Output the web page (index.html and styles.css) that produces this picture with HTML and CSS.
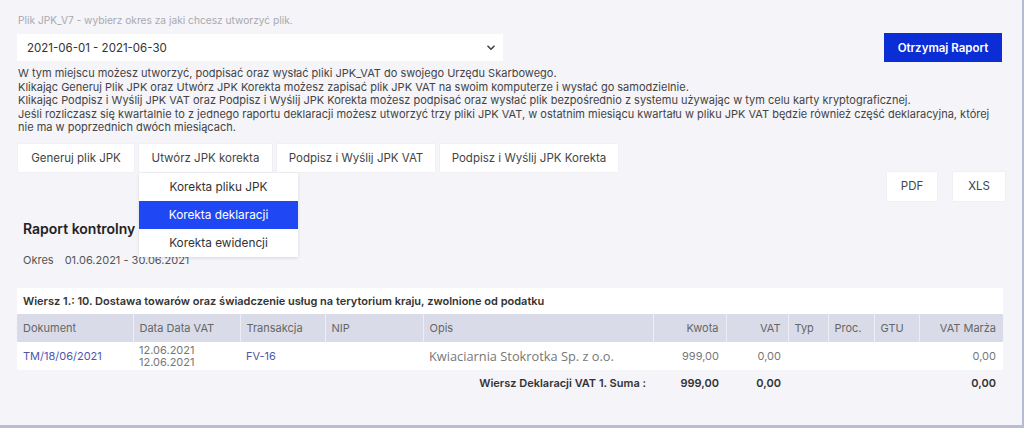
FILE: index.html
```html
<!DOCTYPE html>
<html lang="pl">
<head>
<meta charset="utf-8">
<title>Plik JPK_V7</title>
<link rel="stylesheet" href="styles.css">
</head>
<body>
<div class="page">
  <div class="hint">Plik JPK_V7 - wybierz okres za jaki chcesz utworzyć plik.</div>
  <div class="period-row">
    <div class="select-wrap">
      <select class="period-select">
        <option>2021-06-01 - 2021-06-30</option>
      </select>
      <svg class="chev" width="8" height="6" viewBox="0 0 8 6"><path d="M1 1.2 L4 4.2 L7 1.2" fill="none" stroke="#444" stroke-width="1.6" stroke-linecap="round" stroke-linejoin="round"/></svg>
    </div>
    <button class="btn-primary">Otrzymaj Raport</button>
  </div>
  <p class="info">W tym miejscu możesz utworzyć, podpisać oraz wysłać pliki JPK_VAT do swojego Urzędu Skarbowego.<br>Klikając Generuj Plik JPK oraz Utwórz JPK Korekta możesz zapisać plik JPK VAT na swoim komputerze i wysłać go samodzielnie.<br>Klikając Podpisz i Wyślij JPK VAT oraz Podpisz i Wyślij JPK Korekta możesz podpisać oraz wysłać plik bezpośrednio z systemu używając w tym celu karty kryptograficznej.<br>Jeśli rozliczasz się kwartalnie to z jednego raportu deklaracji możesz utworzyć trzy pliki JPK VAT, w ostatnim miesiącu kwartału w pliku JPK VAT będzie również część deklaracyjna, której nie ma w poprzednich dwóch miesiącach.</p>

  <div class="actions">
    <button class="btn w1">Generuj plik JPK</button>
    <div class="dd">
      <button class="btn w2">Utwórz JPK korekta</button>
      <ul class="dd-menu">
        <li>Korekta pliku JPK</li>
        <li class="active">Korekta deklaracji</li>
        <li>Korekta ewidencji</li>
      </ul>
    </div>
    <button class="btn w3">Podpisz i Wyślij JPK VAT</button>
    <button class="btn w4">Podpisz i Wyślij JPK Korekta</button>
  </div>

  <div class="export">
    <button class="btn small w5">PDF</button>
    <button class="btn small w6">XLS</button>
  </div>

  <h2 class="title">Raport kontrolny</h2>
  <div class="period"><span class="lbl">Okres</span>01.06.2021 - 30.06.2021</div>

  <table class="report">
    <colgroup>
      <col style="width:116px"><col style="width:107px"><col style="width:85px"><col style="width:98px"><col style="width:230px"><col style="width:73px"><col style="width:62px"><col style="width:40px"><col style="width:46px"><col style="width:45px"><col style="width:84px">
    </colgroup>
    <tr class="caption-row"><td colspan="11">Wiersz 1.: 10. Dostawa towarów oraz świadczenie usług na terytorium kraju, zwolnione od podatku</td></tr>
    <tr class="head">
      <th>Dokument</th><th>Data Data VAT</th><th>Transakcja</th><th>NIP</th><th>Opis</th><th class="r">Kwota</th><th class="r">VAT</th><th>Typ</th><th>Proc.</th><th>GTU</th><th class="r">VAT Marża</th>
    </tr>
    <tr class="data">
      <td><a class="link">TM/18/06/2021</a></td>
      <td class="dates">12.06.2021<br>12.06.2021</td>
      <td><a class="link">FV-16</a></td>
      <td></td>
      <td class="desc">Kwiaciarnia Stokrotka Sp. z o.o.</td>
      <td class="r num">999,00</td>
      <td class="r num">0,00</td>
      <td></td><td></td><td></td>
      <td class="r num">0,00</td>
    </tr>
    <tr class="sum">
      <td colspan="5" class="r">Wiersz Deklaracji VAT 1. Suma :</td>
      <td class="r">999,00</td>
      <td class="r">0,00</td>
      <td></td><td></td><td></td>
      <td class="r">0,00</td>
    </tr>
  </table>
</div>
</body>
</html>
```

FILE: styles.css
```css
* { box-sizing: border-box; }
html, body { margin: 0; padding: 0; }
body {
  font-family: Inter, "Liberation Sans", sans-serif;
  background: #f4f4f9;
  color: #444;
}
.page {
  width: 1024px;
  height: 428px;
  overflow: hidden;
  background: #f4f4f9;
  border-right: 2px solid #b4bbd2;
  border-bottom: 3px solid #b9bdcd;
  padding: 13px 19px 0 17px;
}
.hint {
  font-size: 10.2px;
  line-height: 14px;
  color: #a9a9ad;
  padding-left: 1px;
}
.period-row {
  display: flex;
  align-items: center;
  margin-top: 6px;
  height: 29px;
}
.select-wrap {
  position: relative;
  width: 486px;
  height: 27px;
}
.period-select {
  appearance: none;
  -webkit-appearance: none;
  width: 100%;
  height: 100%;
  border: none;
  background: #fff;
  font-family: Inter, "Liberation Sans", sans-serif;
  font-size: 11.5px;
  color: #333;
  padding: 0 10px;
  outline: none;
}
.chev {
  position: absolute;
  right: 8px;
  top: 11px;
}
.btn-primary {
  margin-left: auto;
  width: 118px;
  height: 29px;
  border: none;
  background: #0a2dd6;
  color: #fff;
  font-family: Inter, "Liberation Sans", sans-serif;
  font-weight: 600;
  font-size: 11.5px;
  margin-right: 1px;
}
.info {
  margin: 5px 0 0 1px;
  font-size: 11px;
  line-height: 13.6px;
  color: #444;
}
.actions {
  display: flex;
  gap: 5px;
  margin-top: 9px;
  padding-left: 1px;
}
.btn {
  height: 28px;
  border: none;
  background: #fff;
  color: #444;
  font-family: Inter, "Liberation Sans", sans-serif;
  font-size: 11.5px;
  box-shadow: 0 0 1px rgba(0,0,0,0.12);
  padding: 0;
}
.w1 { width: 116px; }
.w2 { width: 133px; }
.w3 { width: 158px; }
.w4 { width: 178px; }
.dd { position: relative; }
.dd-menu {
  position: absolute;
  top: 29px;
  left: 0;
  width: 159px;
  margin: 0;
  padding: 0;
  list-style: none;
  background: #fff;
  box-shadow: 0 1px 3px rgba(0,0,0,0.12);
  z-index: 5;
}
.dd-menu li {
  height: 28px;
  line-height: 28px;
  text-align: center;
  font-size: 11.8px;
  color: #333;
}
.dd-menu li.active {
  background: #1f47f3;
  color: #fff;
}
.export {
  display: flex;
  justify-content: flex-end;
  gap: 16px;
  height: 29px;
  margin-right: -2px;
}
.btn.small { height: 29px; font-size: 11.5px; }
.w5 { width: 50px; }
.w6 { width: 52px; }
.title {
  margin: 18px 0 0 6px;
  font-size: 14px;
  line-height: 20px;
  font-weight: 600;
  color: #222;
}
.period {
  margin: 13px 0 0 6px;
  font-size: 11px;
  line-height: 16px;
  color: #555;
}
.period .lbl { margin-right: 11px; }
.report {
  margin-top: 20px;
  width: 986px;
  border-collapse: collapse;
  table-layout: fixed;
  font-size: 11px;
}
.report td, .report th { padding: 0 6px; }
.caption-row td {
  background: #fff;
  height: 26px;
  font-weight: 600;
  color: #333;
  font-size: 11px;
}
.head th {
  background: #d9dce8;
  height: 28px;
  font-weight: 400;
  color: #666;
  text-align: left;
  border-left: 1px solid #eceef4;
}
.head th:first-child { border-left: none; }
.report .r { text-align: right; padding-right: 7px; }
.data td {
  background: #fff;
  height: 28px;
  color: #777;
}
.link { color: #4e56b0; text-decoration: none; }
.dates { line-height: 12px; color: #666; }
.desc {
  font-family: "Open Sans", "Liberation Sans", sans-serif;
  font-size: 12.8px;
  color: #000;
}
.num { color: #888; }
.sum td {
  height: 26px;
  font-weight: 600;
  color: #333;
}
```
